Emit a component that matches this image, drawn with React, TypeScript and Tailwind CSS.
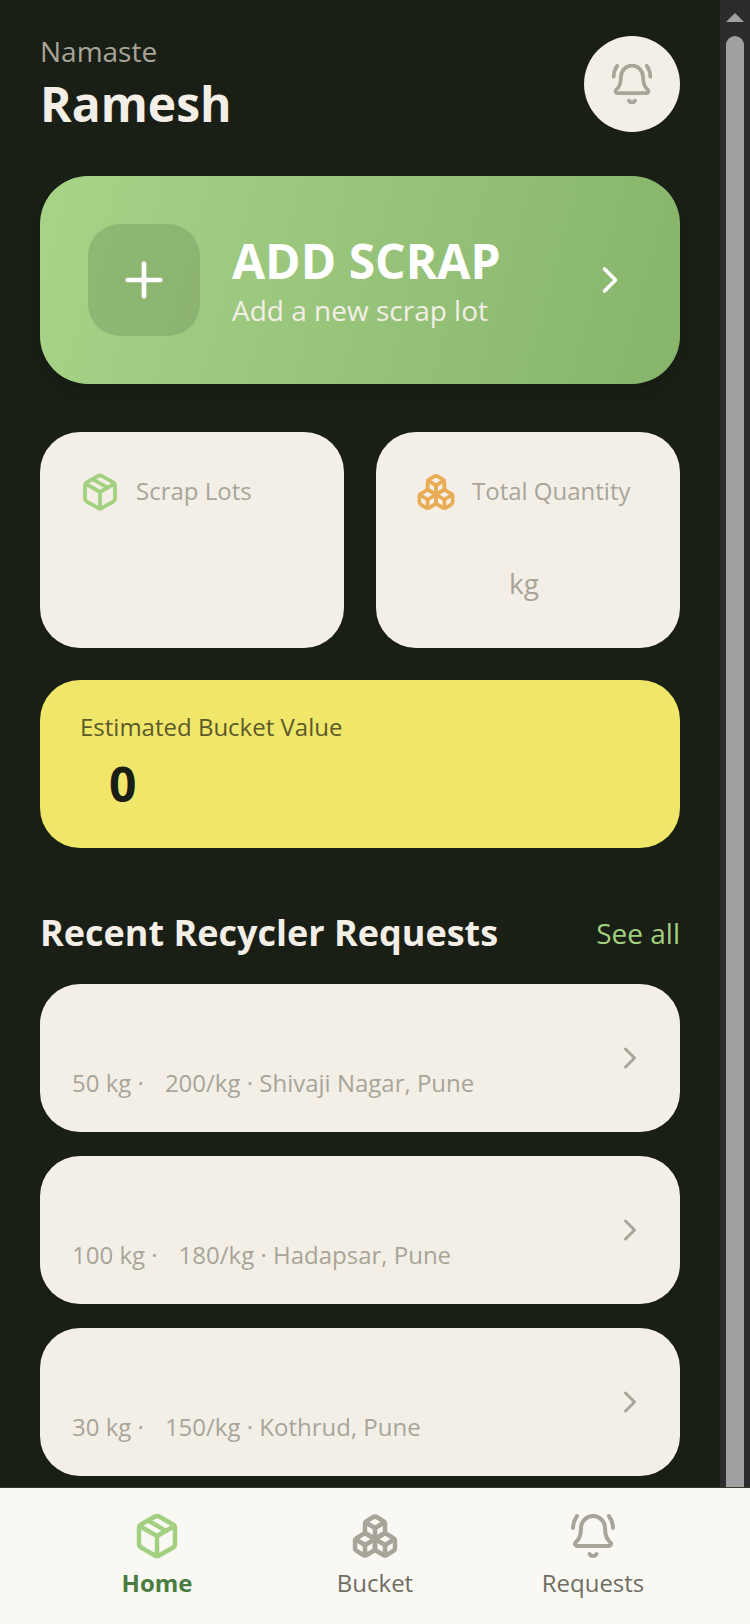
import React from 'react';
import { BellRing, Boxes, ChevronRight, Package, Plus } from 'lucide-react';

interface RequestRow {
  qty: string;
  rate: string;
  place: string;
}

const requests: RequestRow[] = [
  { qty: '50 kg', rate: '200/kg', place: 'Shivaji Nagar, Pune' },
  { qty: '100 kg', rate: '180/kg', place: 'Hadapsar, Pune' },
  { qty: '30 kg', rate: '150/kg', place: 'Kothrud, Pune' },
];

const App: React.FC = () => {
  return (
    <div className="w-[750px] h-[1624px] flex flex-col overflow-hidden bg-[#1a1f16] font-['Open_Sans',sans-serif]">
      <div className="h-[1488px] flex shrink-0 overflow-hidden border-b border-[#2f3a28]">
        {/* Scrolling content */}
        <main className="w-[720px] shrink-0 pt-[35px] px-10">
          <header className="h-[97px] flex items-start justify-between">
            <div>
              <p className="text-[28px] leading-[32px] text-[#a8a598]">Namaste</p>
              <h1 className="mt-[7px] text-[48px] leading-[60px] font-bold text-[#f3efe7]">Ramesh</h1>
            </div>
            <button className="mt-px w-24 h-24 rounded-full bg-[#f3efe7] flex items-center justify-center text-[#a8a598]">
              <BellRing size={44} />
            </button>
          </header>

          <section className="mt-11 h-[208px] rounded-[48px] px-12 flex items-center bg-linear-[105deg] from-[#a8d488] to-[#86b46b] shadow-lg">
            <div className="w-28 h-28 rounded-[32px] bg-[#5f7f50]/30 flex items-center justify-center text-white">
              <Plus size={56} />
            </div>
            <div className="ml-8 flex-1">
              <h2 className="text-[48px] leading-[56px] font-bold text-white">ADD SCRAP</h2>
              <p className="mt-[3px] text-[28px] leading-[36px] text-[#f3efe7]">Add a new scrap lot</p>
            </div>
            <ChevronRight size={44} className="text-white" />
          </section>

          <section className="mt-12 grid grid-cols-2 gap-8">
            <div className="h-[216px] rounded-[40px] bg-[#f3efe7] p-10">
              <div className="flex items-center gap-4 h-10">
                <Package size={40} strokeWidth={2.25} className="text-[#a3d080] shrink-0" />
                <span className="-mt-[2px] text-[24px] text-[#a8a598]">Scrap Lots</span>
              </div>
            </div>
            <div className="h-[216px] rounded-[40px] bg-[#f3efe7] p-10">
              <div className="flex items-center gap-4 h-10">
                <Boxes size={40} strokeWidth={2.25} className="text-[#e8ac55] shrink-0" />
                <span className="-mt-[2px] text-[24px] whitespace-nowrap text-[#a8a598]">Total Quantity</span>
              </div>
              <p className="mt-[53px] pr-2 text-center text-[28px] leading-[36px] text-[#a8a598]">kg</p>
            </div>
          </section>

          <section className="mt-8 h-[168px] rounded-[40px] bg-[#f0e66a] pt-[31px] pl-10">
            <p className="text-[24px] leading-[32px] text-[#5c5a28]">Estimated Bucket Value</p>
            <p className="mt-[11px] pl-[29px] text-[48px] leading-[60px] font-bold text-[#1a1f16]">0</p>
          </section>

          <div className="mt-[59px] h-[52px] mb-[25px] flex items-center justify-between">
            <h2 className="text-[36px] font-bold text-[#f3efe7]">Recent Recycler Requests</h2>
            <a className="text-[28px] text-[#a3d080]">See all</a>
          </div>

          <div className="flex flex-col gap-6">
            {requests.map((r) => (
              <div key={r.qty} className="h-[148px] rounded-[40px] bg-[#f3efe7] pl-8 pr-8 flex items-center justify-between">
                <p className="mt-[50px] text-[24px] whitespace-pre text-[#a8a598]">
                  {r.qty} ·<span className="inline-block w-[21px]" />{r.rate} · {r.place}
                </p>
                <ChevronRight size={36} className="text-[#a8a598]" />
              </div>
            ))}
          </div>
        </main>

        {/* Scrollbar */}
        <div className="w-[30px] shrink-0 bg-[#2c2c2c] flex flex-col items-center">
          <div className="mt-[13px] w-0 h-0 border-x-[9px] border-x-transparent border-b-[9px] border-b-[#a0a0a0]" />
          <div className="mt-[14px] w-[18px] flex-1 rounded-t-[9px] bg-[#a0a0a0]" />
        </div>
      </div>

      <nav className="flex-1 bg-[#faf8f3] px-12 grid grid-cols-3 pt-6">
        <div className="flex flex-col items-center">
          <Package size={48} strokeWidth={2.25} className="text-[#a3d080]" />
          <span className="mt-[7px] text-[24px] leading-[32px] font-bold text-[#4a7c3f]">Home</span>
        </div>
        <div className="flex flex-col items-center">
          <Boxes size={48} strokeWidth={2.25} className="text-[#a8a598]" />
          <span className="mt-[7px] text-[24px] leading-[32px] text-[#6f6d62]">Bucket</span>
        </div>
        <div className="flex flex-col items-center">
          <BellRing size={48} className="text-[#a8a598]" />
          <span className="mt-[7px] text-[24px] leading-[32px] text-[#6f6d62]">Requests</span>
        </div>
      </nav>
    </div>
  );
};

export default App;
